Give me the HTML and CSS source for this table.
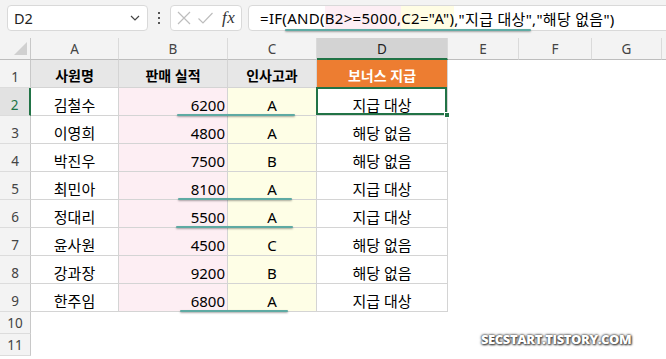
FILE: index.html
```html
<!DOCTYPE html>
<html lang="ko">
<head>
<meta charset="utf-8">
<link rel="stylesheet" href="styles.css">
</head>
<body>
<div class="app">
  <div class="topbar">
    <div class="namebox">
      <span class="name">D2</span>
      <svg class="chev" width="10" height="6" viewBox="0 0 10 6"><path d="M1 1 L5 5 L9 1" fill="none" stroke="#444" stroke-width="1.2"/></svg>
    </div>
    <div class="dots"><i></i><i></i><i></i></div>
    <div class="fxbox">
      <svg width="16" height="16" viewBox="0 0 16 16"><path d="M2 2 L14 14 M14 2 L2 14" stroke="#bdbdbd" stroke-width="1.2" fill="none"/></svg>
      <svg width="17" height="16" viewBox="0 0 17 16"><path d="M1.5 8.5 L6 13 L15.5 3" stroke="#bdbdbd" stroke-width="1.2" fill="none"/></svg>
      <span class="fx">fx</span>
    </div>
    <div class="formula">
      <span>=IF(AND(</span><span class="hl-pink">B2&gt;=5000,</span><span class="hl-yellow">C2="A")</span><span>,"지급 대상","해당 없음")</span>
      <div class="mark mark-formula"></div>
    </div>
  </div>

  <div class="sheet">
    <div class="row colhead">
      <div class="corner"><span class="tri"></span></div>
      <div class="ch">A</div><div class="ch">B</div><div class="ch">C</div><div class="ch sel">D</div><div class="ch">E</div><div class="ch">F</div><div class="ch">G</div><div class="ch last"></div>
    </div>
    <div class="row r28">
      <div class="rh">1</div>
      <div class="c th center">사원명</div><div class="c th center">판매 실적</div><div class="c th center">인사고과</div><div class="c th orange center">보너스 지급</div><div class="e"></div><div class="e"></div><div class="e"></div><div class="e"></div>
    </div>
    <div class="row r28">
      <div class="rh selrow">2</div>
      <div class="c center">김철수</div><div class="c pink right">6200</div><div class="c yellow center">A</div><div class="c center active">지급 대상<span class="handle"></span></div><div class="e"></div><div class="e"></div><div class="e"></div><div class="e"></div>
    </div>
    <div class="row r28">
      <div class="rh">3</div>
      <div class="c center">이영희</div><div class="c pink right">4800</div><div class="c yellow center">A</div><div class="c center">해당 없음</div><div class="e"></div><div class="e"></div><div class="e"></div><div class="e"></div>
    </div>
    <div class="row r28">
      <div class="rh">4</div>
      <div class="c center">박진우</div><div class="c pink right">7500</div><div class="c yellow center">B</div><div class="c center">해당 없음</div><div class="e"></div><div class="e"></div><div class="e"></div><div class="e"></div>
    </div>
    <div class="row r28">
      <div class="rh">5</div>
      <div class="c center">최민아</div><div class="c pink right">8100</div><div class="c yellow center">A</div><div class="c center">지급 대상</div><div class="e"></div><div class="e"></div><div class="e"></div><div class="e"></div>
    </div>
    <div class="row r28">
      <div class="rh">6</div>
      <div class="c center">정대리</div><div class="c pink right">5500</div><div class="c yellow center">A</div><div class="c center">지급 대상</div><div class="e"></div><div class="e"></div><div class="e"></div><div class="e"></div>
    </div>
    <div class="row r28">
      <div class="rh">7</div>
      <div class="c center">윤사원</div><div class="c pink right">4500</div><div class="c yellow center">C</div><div class="c center">해당 없음</div><div class="e"></div><div class="e"></div><div class="e"></div><div class="e"></div>
    </div>
    <div class="row r28">
      <div class="rh">8</div>
      <div class="c center">강과장</div><div class="c pink right">9200</div><div class="c yellow center">B</div><div class="c center">해당 없음</div><div class="e"></div><div class="e"></div><div class="e"></div><div class="e"></div>
    </div>
    <div class="row r28">
      <div class="rh">9</div>
      <div class="c center">한주임</div><div class="c pink right">6800</div><div class="c yellow center">A</div><div class="c center">지급 대상</div><div class="e"></div><div class="e"></div><div class="e"></div><div class="e"></div>
    </div>
    <div class="row r22">
      <div class="rh small">10</div>
      <div class="e"></div><div class="e"></div><div class="e"></div><div class="e"></div><div class="e"></div><div class="e"></div><div class="e"></div><div class="e"></div>
    </div>
    <div class="row r22">
      <div class="rh small">11</div>
      <div class="e"></div><div class="e"></div><div class="e"></div><div class="e"></div><div class="e"></div><div class="e"></div><div class="e"></div><div class="e"></div>
    </div>

    <div class="mark mark-r2"></div>
    <div class="mark mark-r5"></div>
    <div class="mark mark-r6"></div>
    <div class="mark mark-r9"></div>
    <div class="watermark">SECSTART.TISTORY.COM</div>
  </div>
</div>
</body>
</html>
```

FILE: styles.css
```css
* { box-sizing: border-box; }
html, body { margin: 0; padding: 0; }
body {
  width: 666px;
  height: 359px;
  overflow: hidden;
  background: #ffffff;
  font-family: "Noto Sans", "Noto Sans CJK KR", sans-serif;
  color: #000;
}
.app { width: 666px; height: 359px; overflow: hidden; }

/* ---------- top bar ---------- */
.topbar {
  height: 38px;
  background: #f3f3f3;
  display: flex;
  align-items: flex-start;
  padding: 5px 0 0 7px;
}
.namebox {
  width: 141px;
  height: 26px;
  background: #fff;
  border: 1px solid #d9d9d9;
  border-radius: 4px;
  display: flex;
  align-items: center;
  justify-content: space-between;
  padding: 0 7px 0 6px;
}
.name { font-size: 14.5px; color: #222; }
.dots {
  width: 22px;
  height: 26px;
  display: flex;
  flex-direction: column;
  align-items: center;
  justify-content: center;
  gap: 3px;
}
.dots i { display: block; width: 2px; height: 2px; background: #555; }
.fxbox {
  width: 72px;
  height: 26px;
  background: #fff;
  border: 1px solid #d9d9d9;
  border-radius: 4px;
  display: flex;
  align-items: center;
  padding: 0 0 0 5px;
  gap: 5px;
}
.fx {
  font-family: "Liberation Serif", "DejaVu Serif", serif;
  font-style: italic;
  font-size: 17px;
  color: #333;
  margin-left: 3px;
  letter-spacing: 0.5px;
}
.formula {
  position: relative;
  flex: 1;
  height: 26px;
  margin-left: 6px;
  margin-right: -10px;
  background: #fff;
  border: 1px solid #d9d9d9;
  border-radius: 4px;
  display: flex;
  align-items: stretch;
  padding-left: 11px;
  font-size: 15px;
  letter-spacing: 0.3px;
  white-space: nowrap;
}
.formula span { display: flex; align-items: center; }
.hl-pink { background: #fdeef4; }
.hl-yellow { background: #fffde4; }

/* ---------- sheet ---------- */
.sheet { position: relative; }
.row {
  display: grid;
  grid-template-columns: 31px 88px 109px 89px 131px 71px 73px 70px 4px;
}
.colhead { height: 22px; background: #f3f3f3; }
.r28 { height: 28px; }
.r22 { height: 22px; }

.corner {
  position: relative;
  border-right: 1px solid #c8c8c8;
  border-bottom: 1px solid #bdbdbd;
}
.tri {
  position: absolute;
  right: 3px;
  bottom: 4px;
  width: 0; height: 0;
  border-left: 13px solid transparent;
  border-bottom: 13px solid #d0d0d0;
}
.ch {
  font-size: 13.5px;
  color: #444;
  display: flex;
  align-items: center;
  justify-content: center;
  border-right: 1px solid #dadada;
  border-bottom: 1px solid #bdbdbd;
  padding-top: 1px;
}
.ch.sel {
  background: #d3d3d3;
  color: #222;
  border-bottom: 2px solid #217346;
}
.ch.last { border-right: none; }

.rh {
  background: #f3f3f3;
  border-right: 1px solid #c8c8c8;
  border-bottom: 1px solid #dcdcdc;
  font-size: 13.5px;
  color: #444;
  display: flex;
  justify-content: center;
  align-items: center;
  padding-top: 6px;
}
.rh.small { padding-top: 1px; }
.rh.selrow {
  background: #e2e2e2;
  color: #217346;
  border-right: 2px solid #217346;
}

.c {
  display: flex;
  align-items: center;
  padding-top: 6px;
  font-size: 15px;
  border-right: 1px solid #d4d4d4;
  border-bottom: 1px solid #d4d4d4;
  white-space: nowrap;
}
.center { justify-content: center; }
.right { justify-content: flex-end; padding-right: 2px; }
.pink { background: #fdeef3; }
.yellow { background: #fefee6; }
.th {
  background: #e7e7e7;
  font-weight: bold;
  font-size: 14px;
  padding-top: 2px;
}
.orange { background: #ed7d31; color: #fff; }
.active { position: relative; }
.active::before {
  content: "";
  position: absolute;
  left: -1px; top: -1px; right: 0; bottom: 0;
  border: 2px solid #217346;
}
.handle {
  position: absolute;
  right: -3px;
  bottom: -3px;
  width: 6px;
  height: 6px;
  background: #217346;
  border: 1px solid #fff;
  z-index: 2;
}
.e { background: #fff; }

/* ---------- annotation marks ---------- */
.mark {
  position: absolute;
  height: 2px;
  background: #5eaaa3;
  border-radius: 1px;
  box-shadow: 0 1px 2px rgba(0,0,0,0.35);
  z-index: 3;
}
.mark-formula { left: 36px; width: 246px; top: 23px; }
.mark-r2 { left: 177px; width: 118px; top: 76px; }
.mark-r5 { left: 178px; width: 114px; top: 160px; }
.mark-r6 { left: 176px; width: 117px; top: 188px; }
.mark-r9 { left: 180px; width: 108px; top: 272px; }

.watermark {
  position: absolute;
  left: 481px;
  top: 292px;
  font-family: "Open Sans", "Noto Sans", sans-serif;
  font-weight: 800;
  font-size: 13px;
  letter-spacing: -0.4px;
  color: #fff;
  text-shadow: 0 0 2px #333, 0 0 3px #555, 1px 1px 2px #444;
  z-index: 4;
}
```
